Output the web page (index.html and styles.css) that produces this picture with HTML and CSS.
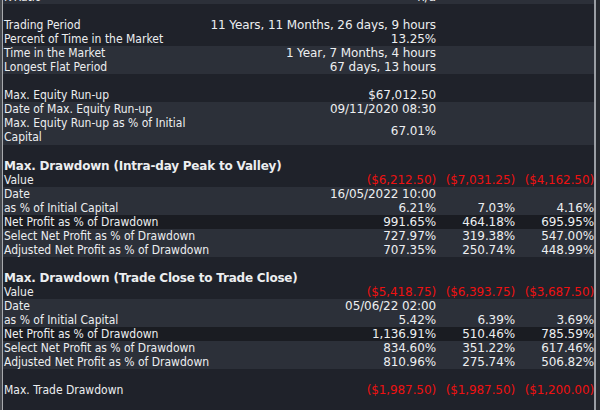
FILE: index.html
```html
<!DOCTYPE html>
<html>
<head>
<meta charset="utf-8">
<link rel="stylesheet" href="styles.css">
</head>
<body>
<div class="page">
  <div class="edge-left"></div>
  <div class="table">
    <div class="row light first"><span class="lbl">K-Ratio</span><span class="v">n/a</span></div>
    <div class="row dark empty"></div>
    <div class="row dark"><span class="lbl">Trading Period</span><span class="v">11 Years, 11 Months, 26 days, 9 hours</span></div>
    <div class="row dark"><span class="lbl">Percent of Time in the Market</span><span class="v">13.25%</span></div>
    <div class="row light"><span class="lbl">Time in the Market</span><span class="v">1 Year, 7 Months, 4 hours</span></div>
    <div class="row light"><span class="lbl">Longest Flat Period</span><span class="v">67 days, 13 hours</span></div>
    <div class="row dark empty"></div>
    <div class="row dark"><span class="lbl">Max. Equity Run-up</span><span class="v">$67,012.50</span></div>
    <div class="row light"><span class="lbl">Date of Max. Equity Run-up</span><span class="v">09/11/2020 08:30</span></div>
    <div class="row light tall"><span class="lbl">Max. Equity Run-up as % of Initial Capital</span><span class="v">67.01%</span></div>
    <div class="row dark empty"></div>
    <div class="row dark head"><span class="h">Max. Drawdown (Intra-day Peak to Valley)</span></div>
    <div class="row dark"><span class="lbl">Value</span><span class="v neg">($6,212.50)</span><span class="v neg">($7,031.25)</span><span class="v neg">($4,162.50)</span></div>
    <div class="row light"><span class="lbl">Date</span><span class="v">16/05/2022 10:00</span></div>
    <div class="row light"><span class="lbl">as % of Initial Capital</span><span class="v">6.21%</span><span class="v">7.03%</span><span class="v">4.16%</span></div>
    <div class="row darker"><span class="lbl">Net Profit as % of Drawdown</span><span class="v">991.65%</span><span class="v">464.18%</span><span class="v">695.95%</span></div>
    <div class="row light"><span class="lbl">Select Net Profit as % of Drawdown</span><span class="v">727.97%</span><span class="v">319.38%</span><span class="v">547.00%</span></div>
    <div class="row light"><span class="lbl">Adjusted Net Profit as % of Drawdown</span><span class="v">707.35%</span><span class="v">250.74%</span><span class="v">448.99%</span></div>
    <div class="row dark empty"></div>
    <div class="row dark head"><span class="h">Max. Drawdown (Trade Close to Trade Close)</span></div>
    <div class="row dark"><span class="lbl">Value</span><span class="v neg">($5,418.75)</span><span class="v neg">($6,393.75)</span><span class="v neg">($3,687.50)</span></div>
    <div class="row light"><span class="lbl">Date</span><span class="v">05/06/22 02:00</span></div>
    <div class="row light"><span class="lbl">as % of Initial Capital</span><span class="v">5.42%</span><span class="v">6.39%</span><span class="v">3.69%</span></div>
    <div class="row darker"><span class="lbl">Net Profit as % of Drawdown</span><span class="v">1,136.91%</span><span class="v">510.46%</span><span class="v">785.59%</span></div>
    <div class="row light"><span class="lbl">Select Net Profit as % of Drawdown</span><span class="v">834.60%</span><span class="v">351.22%</span><span class="v">617.46%</span></div>
    <div class="row light"><span class="lbl">Adjusted Net Profit as % of Drawdown</span><span class="v">810.96%</span><span class="v">275.74%</span><span class="v">506.82%</span></div>
    <div class="row dark empty"></div>
    <div class="row dark"><span class="lbl">Max. Trade Drawdown</span><span class="v neg">($1,987.50)</span><span class="v neg">($1,987.50)</span><span class="v neg">($1,200.00)</span></div>
    <div class="row dark empty"></div>
  </div>
  <div class="edge-right"></div>
</div>
</body>
</html>
```

FILE: styles.css
```css
html, body {
  margin: 0;
  padding: 0;
  background: #1f222a;
  height: 410px;
  overflow: hidden;
}

.page {
  display: flex;
  height: 410px;
  overflow: hidden;
  font-family: "DejaVu Sans", sans-serif;
  font-size: 12px;
  letter-spacing: -0.1px;
  color: #eceef0;
}

.edge-left {
  width: 2px;
  background: #45484e;
  flex: none;
}

.table {
  flex: none;
  width: 591px;
  border-left: 1px solid #a9abae;
  border-right: 2px solid #9a9ea4;
  background: #1f222a;
}

.edge-right {
  flex: 1;
  background: #272a30;
}

.row {
  display: grid;
  grid-template-columns: 202px 231px 79px 79px;
  height: 14px;
  line-height: 14px;
  white-space: nowrap;
}

.row.first {
  margin-top: -10px;
}

.row.tall {
  height: 29px;
}

.row.tall .lbl {
  white-space: normal;
  line-height: 14px;
  padding-right: 16px;
}

.row.tall .v {
  line-height: 30px;
}

.dark { background: #1f222a; }
.light { background: #2c3039; }
.darker { background: #1a1c22; }

.lbl {
  padding-left: 1px;
  font-family: "DejaVu Sans Condensed", "DejaVu Sans", sans-serif;
  letter-spacing: 0;
}

.v {
  text-align: right;
}

.neg {
  color: #ee1111;
}

.head .h {
  grid-column: 1 / 5;
  padding-left: 1px;
  font-weight: bold;
  font-size: 12px;
  letter-spacing: -0.2px;
}
```
